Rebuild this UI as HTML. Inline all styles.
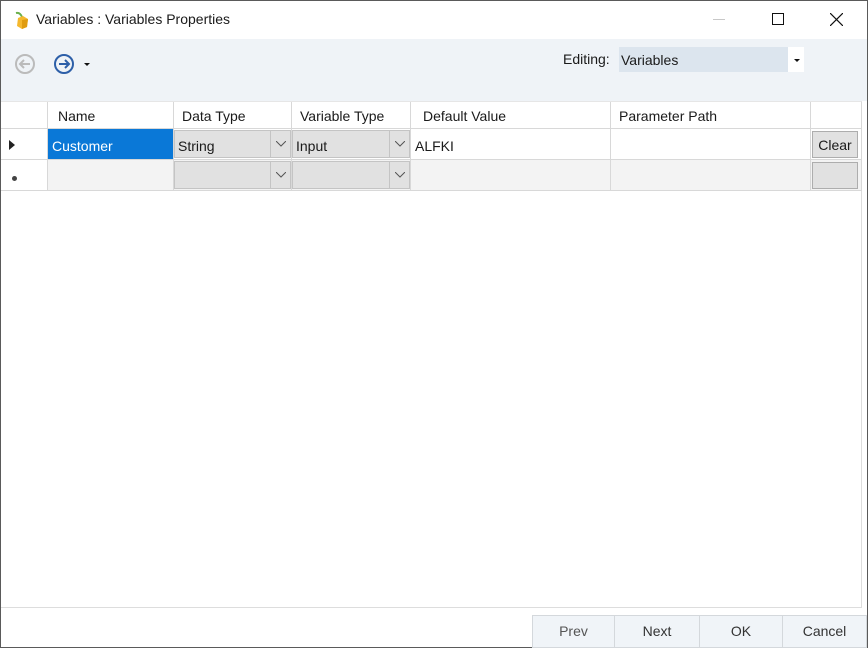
<!DOCTYPE html>
<html><head><style>
*{box-sizing:border-box;margin:0;padding:0}
body{width:868px;height:648px;overflow:hidden;background:#fff;font-family:"Liberation Sans",sans-serif;font-size:14px;color:#1a1a1a;position:relative}
.a{position:absolute}
.frame{left:0;top:0;width:868px;height:648px;border:1px solid #5a5a5a}
.cell{position:absolute;border-right:1px solid #d8d8d8;border-bottom:1px solid #d8d8d8;padding-left:4px;line-height:34px;white-space:nowrap}
.hd{line-height:28px;padding-left:10px}
.combo{position:absolute;background:#e1e1e1;border:1px solid #c4c4c4;line-height:30px;padding-left:3px}
.dd{position:absolute;background:#e1e1e1;border-left:1px solid #c4c4c4;width:20px;top:0;right:0;bottom:0}
.btn{position:absolute;top:615px;height:33px;background:#f0f4f8;border:1px solid #d4d8dc;text-align:center;line-height:31px;color:#333}
</style></head><body>
<div class="a frame"></div>
<svg class="a" style="left:12px;top:10px" width="20" height="20" viewBox="0 0 20 20"><path d="M4 3 Q8 2 10 7" stroke="#6ab04c" stroke-width="2" fill="none"/><polygon points="6,8 11,6 16,9 15,17 10,19 5,16" fill="#f5b82e"/><polygon points="10,10 16,9 15,17 10,19" fill="#e09c10"/></svg>
<div class="a" style="left:36px;top:11px;font-size:14px">Variables : Variables Properties</div>
<div class="a" style="left:713px;top:19px;width:12px;height:1px;background:#c8c8c8"></div>
<div class="a" style="left:772px;top:13px;width:12px;height:12px;border:1px solid #111"></div>
<svg class="a" style="left:830px;top:13px" width="13" height="13"><path d="M0 0L13 13M13 0L0 13" stroke="#111" stroke-width="1.2"/></svg>
<div class="a" style="left:1px;top:39px;width:866px;height:62px;background:#eff3f7"></div>
<svg class="a" style="left:14px;top:53px" width="22" height="22" viewBox="0 0 22 22"><circle cx="11" cy="11" r="9" fill="none" stroke="#bbb" stroke-width="2"/><path d="M16 11H7M10 7L6 11L10 15" stroke="#bbb" stroke-width="2" fill="none"/></svg>
<svg class="a" style="left:53px;top:53px" width="22" height="22" viewBox="0 0 22 22"><circle cx="11" cy="11" r="9" fill="none" stroke="#2d5fa8" stroke-width="2"/><path d="M6 11H15M12 7L16 11L12 15" stroke="#2d5fa8" stroke-width="2" fill="none"/></svg>
<div class="a" style="left:84px;top:63px;border-left:3px solid transparent;border-right:3px solid transparent;border-top:3px solid #111"></div>
<div class="a" style="left:563px;top:51px">Editing:</div>
<div class="a" style="left:619px;top:47px;width:185px;height:25px;background:#dce5ee;padding-left:2px;line-height:26px">Variables</div>
<div class="a" style="left:788px;top:47px;width:16px;height:25px;background:#fff"></div>
<div class="a" style="left:794px;top:59px;border-left:3px solid transparent;border-right:3px solid transparent;border-top:3px solid #111"></div>
<div class="a" style="left:1px;top:101px;width:861px;height:507px;border-right:1px solid #ddd;border-bottom:1px solid #ddd;border-top:1px solid #e6e6e6"></div>
<div class="cell hd" style="left:1px;top:102px;width:47px;height:27px"></div>
<div class="cell hd" style="left:48px;top:102px;width:126px;height:27px">Name</div>
<div class="cell hd" style="left:174px;top:102px;width:118px;height:27px;padding-left:8px">Data Type</div>
<div class="cell hd" style="left:292px;top:102px;width:119px;height:27px;padding-left:8px">Variable Type</div>
<div class="cell hd" style="left:411px;top:102px;width:200px;height:27px;padding-left:12px">Default Value</div>
<div class="cell hd" style="left:611px;top:102px;width:200px;height:27px;padding-left:8px">Parameter Path</div>
<div class="cell hd" style="left:811px;top:102px;width:51px;height:27px"></div>
<div class="cell" style="left:1px;top:129px;width:47px;height:31px"></div>
<div class="a" style="left:9px;top:140px;border-top:5px solid transparent;border-bottom:5px solid transparent;border-left:6px solid #222"></div>
<div class="cell" style="left:48px;top:129px;width:126px;height:31px;background:#0a78d7;color:#fff">Customer</div>
<div class="cell" style="left:174px;top:129px;width:118px;height:31px;padding:0"></div>
<div class="combo" style="left:174px;top:130px;width:117px;height:28px">String<div class="dd"><svg class="a" style="left:5px;top:10px" width="10" height="6"><path d="M0 0L5 5L10 0" stroke="#555" fill="none"/></svg></div></div>
<div class="cell" style="left:292px;top:129px;width:119px;height:31px;padding:0"></div>
<div class="combo" style="left:292px;top:130px;width:118px;height:28px">Input<div class="dd"><svg class="a" style="left:5px;top:10px" width="10" height="6"><path d="M0 0L5 5L10 0" stroke="#555" fill="none"/></svg></div></div>
<div class="cell" style="left:411px;top:129px;width:200px;height:31px">ALFKI</div>
<div class="cell" style="left:611px;top:129px;width:200px;height:31px"></div>
<div class="cell" style="left:811px;top:129px;width:51px;height:31px"></div>
<div class="a" style="left:812px;top:131px;width:46px;height:27px;background:#e1e1e1;border:1px solid #adadad;text-align:center;line-height:27px">Clear</div>
<div class="cell" style="left:1px;top:160px;width:47px;height:31px;background:#fff"></div>
<div class="a" style="left:12px;top:176px;width:5px;height:5px;border-radius:50%;background:#444"></div>
<div class="cell" style="left:48px;top:160px;width:126px;height:31px;background:#f3f3f3"></div>
<div class="cell" style="left:174px;top:160px;width:118px;height:31px;background:#f3f3f3"></div>
<div class="combo" style="left:174px;top:161px;width:117px;height:28px"><div class="dd"><svg class="a" style="left:5px;top:10px" width="10" height="6"><path d="M0 0L5 5L10 0" stroke="#555" fill="none"/></svg></div></div>
<div class="cell" style="left:292px;top:160px;width:119px;height:31px;background:#f3f3f3"></div>
<div class="combo" style="left:292px;top:161px;width:118px;height:28px"><div class="dd"><svg class="a" style="left:5px;top:10px" width="10" height="6"><path d="M0 0L5 5L10 0" stroke="#555" fill="none"/></svg></div></div>
<div class="cell" style="left:411px;top:160px;width:200px;height:31px;background:#f3f3f3"></div>
<div class="cell" style="left:611px;top:160px;width:200px;height:31px;background:#f3f3f3"></div>
<div class="cell" style="left:811px;top:160px;width:51px;height:31px;background:#f3f3f3"></div>
<div class="a" style="left:812px;top:162px;width:46px;height:27px;background:#e1e1e1;border:1px solid #adadad"></div>
<div class="btn" style="left:532px;width:83px;color:#555">Prev</div>
<div class="btn" style="left:614px;width:86px">Next</div>
<div class="btn" style="left:699px;width:84px">OK</div>
<div class="btn" style="left:782px;width:85px">Cancel</div>
</body></html>
